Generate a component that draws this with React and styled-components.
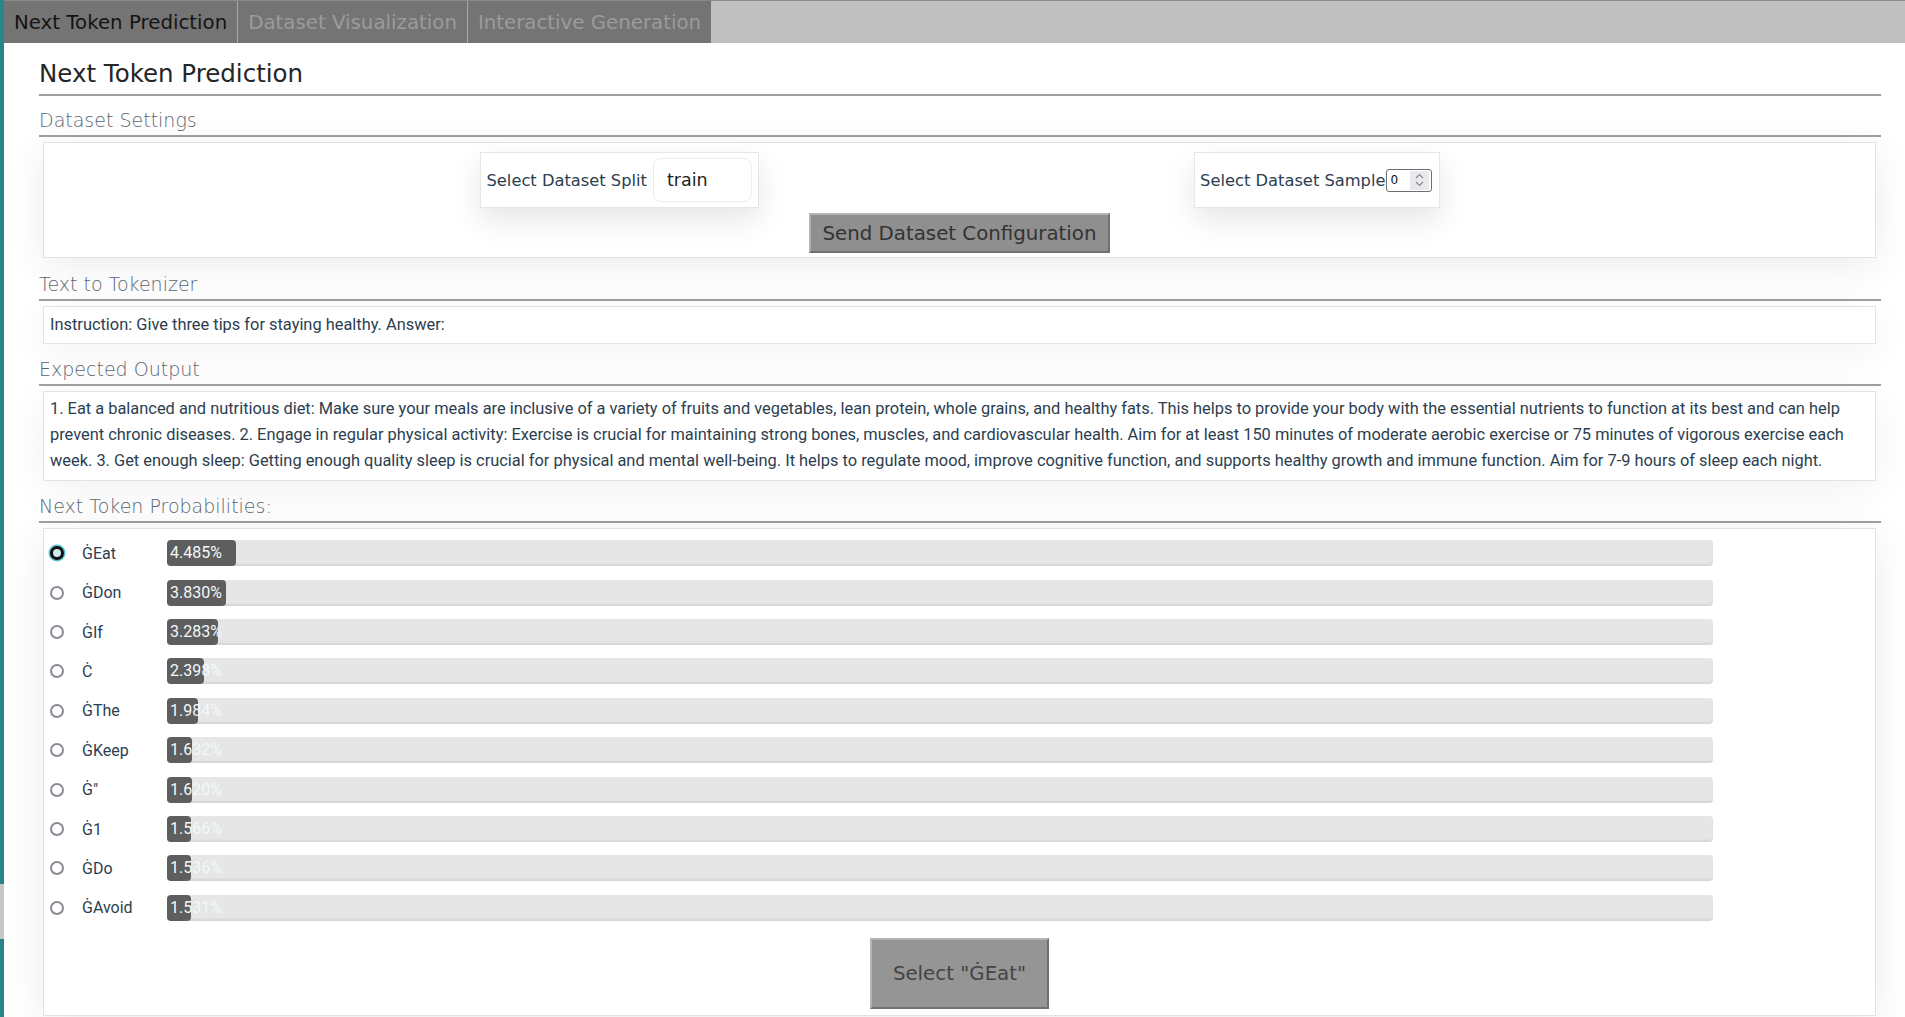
import React from 'react';
import styled, { createGlobalStyle } from 'styled-components';

const GlobalStyle = createGlobalStyle`
  html, body {
    margin: 0;
    padding: 0;
    background: #fff;
  }
  body {
    font-family: "DejaVu Sans", sans-serif;
  }
`;

const Shell = styled.div`
  display: flex;
  min-height: 1017px;
`;

const Edge = styled.div`
  width: 4px;
  flex: none;
  display: flex;
  flex-direction: column;
  background: #2a858b;
`;

const EdgePatch = styled.div`
  margin-top: 884px;
  height: 55px;
  background: #c6c6c6;
`;

const Main = styled.main`
  flex: 1;
  min-width: 0;
  background: #fff;
`;

const TabBar = styled.nav`
  display: flex;
  height: 43px;
  box-sizing: border-box;
  background: #c0c0c0;
  border-top: 1px solid #8a8a8a;
`;

const Tab = styled.button`
  height: 100%;
  padding: 0 10px;
  border: none;
  border-left: ${p => (p.$first ? 'none' : '1px solid #a9a9a9')};
  background: #747474;
  color: ${p => (p.$active ? '#141414' : '#9b9b9b')};
  font: 400 19.8px "DejaVu Sans", sans-serif;
  cursor: pointer;
`;

const Content = styled.div`
  padding: 17px 24px 0 35px;
`;

const PageTitle = styled.h1`
  margin: 0;
  padding-bottom: 6px;
  border-bottom: 2px solid #a0a0a0;
  font: 400 24.5px/28px "DejaVu Sans", sans-serif;
  color: #262626;
`;

const SectionTitle = styled.h2`
  margin: ${p => p.$top || 14}px 0 0;
  padding-bottom: 4px;
  border-bottom: 2px solid #a0a0a0;
  font: 200 19px/22px "DejaVu Sans", sans-serif;
  color: #5a6570;
`;

const Card = styled.section`
  margin: 5px 5px 0 4px;
  padding: ${p => p.$pad || '0'};
  background: #fff;
  border: 1px solid #e2e2e2;
  box-shadow: 0 8px 40px rgba(0, 0, 0, 0.08);
`;

const ConfigRow = styled.div`
  width: 960px;
  margin: 0 auto;
  display: flex;
  justify-content: space-between;
`;

const ConfigBox = styled.div`
  height: 56px;
  box-sizing: border-box;
  display: flex;
  align-items: center;
  padding: 0 ${p => p.$right || 6}px 0 ${p => p.$left || 6}px;
  background: #fff;
  border: 1px solid #e6e6e6;
  box-shadow: 0 12px 30px rgba(0, 0, 0, 0.1);
`;

const Label = styled.label`
  font: 400 16.3px "DejaVu Sans", sans-serif;
  color: #2c3e50;
  white-space: nowrap;
`;

const SplitInput = styled.div`
  width: 99px;
  height: 44px;
  box-sizing: border-box;
  margin-left: 6px;
  padding: 0 13px;
  display: flex;
  align-items: center;
  border: 1px solid #ececec;
  border-radius: 8px;
  font: 400 17.5px "DejaVu Sans", sans-serif;
  color: #222;
`;

const NumberInput = styled.div`
  width: 46px;
  height: 23px;
  box-sizing: border-box;
  display: flex;
  align-items: center;
  justify-content: space-between;
  padding: 0 2px 0 4px;
  border: 1px solid #6e6e6e;
  border-radius: 3px;
  font: 400 12px "DejaVu Sans", sans-serif;
  color: #111;
`;

const Spinner = styled.span`
  width: 19px;
  height: 19px;
  display: flex;
  align-items: center;
  justify-content: center;
  background: #e9e9ed;
`;

const ButtonRow = styled.div`
  display: flex;
  justify-content: center;
  margin-top: ${p => p.$top || 5}px;
`;

const GrayButton = styled.button`
  height: ${p => p.$h || 40}px;
  padding: 0 ${p => p.$px || 11}px;
  background: ${p => p.$bg || '#8f8f8f'};
  border: 2px solid;
  border-color: #b4b4b4 #707070 #707070 #b4b4b4;
  font: 400 19.8px "DejaVu Sans", sans-serif;
  color: ${p => p.$color || '#333'};
  cursor: pointer;
`;

const TextBox = styled.div`
  margin: 5px 5px 0 4px;
  padding: ${p => p.$pad || '6px 6px'};
  background: #fff;
  border: 1px solid #e4e4e4;
  box-shadow: 0 8px 40px rgba(0, 0, 0, 0.06);
  font: 400 16.4px/${p => p.$lh || 24}px Roboto, sans-serif;
  color: #2c3e50;
`;

const ProbRow = styled.div`
  height: 39.4px;
  display: flex;
  align-items: center;
  padding-left: 6px;
`;

const Radio = styled.span`
  width: 14px;
  height: 14px;
  box-sizing: border-box;
  flex: none;
  border-radius: 50%;
  border: ${p => (p.$checked ? '3.5px solid #111' : '2px solid #8d8a96')};
  background: ${p => (p.$checked ? '#cfe9ec' : '#fff')};
  box-shadow: ${p => (p.$checked ? '0 0 0 1.5px #55c2cc' : 'none')};
`;

const TokenName = styled.span`
  width: 85px;
  margin-left: 18px;
  flex: none;
  font: 400 16px Roboto, sans-serif;
  color: #2c3e50;
`;

const Track = styled.div`
  position: relative;
  flex: 1;
  margin-right: 162px;
  height: 26px;
  border-radius: 4px;
  background: #e6e6e6;
  box-shadow: inset 0 -2px 2px rgba(0, 0, 0, 0.07);
`;

const Fill = styled.div`
  position: absolute;
  left: 0;
  top: 0;
  bottom: 0;
  border-radius: 4px;
  background: #5e5e5e;
`;

const Pct = styled.span`
  position: relative;
  padding-left: 3px;
  font: 400 16px/26px Roboto, sans-serif;
  color: #f1f9fa;
`;

const tokens = [
  ['\u0120Eat', '4.485'],
  ['\u0120Don', '3.830'],
  ['\u0120If', '3.283'],
  ['\u010A', '2.398'],
  ['\u0120The', '1.984'],
  ['\u0120Keep', '1.632'],
  ['\u0120"', '1.620'],
  ['\u01201', '1.566'],
  ['\u0120Do', '1.536'],
  ['\u0120Avoid', '1.531'],
];

const expected =
  '1. Eat a balanced and nutritious diet: Make sure your meals are inclusive of a variety of fruits and vegetables, lean protein, whole grains, and healthy fats. This helps to provide your body with the essential nutrients to function at its best and can help prevent chronic diseases. 2. Engage in regular physical activity: Exercise is crucial for maintaining strong bones, muscles, and cardiovascular health. Aim for at least 150 minutes of moderate aerobic exercise or 75 minutes of vigorous exercise each week. 3. Get enough sleep: Getting enough quality sleep is crucial for physical and mental well-being. It helps to regulate mood, improve cognitive function, and supports healthy growth and immune function. Aim for 7-9 hours of sleep each night.';

const SpinIcon = () => (
  <svg width="9" height="14" viewBox="0 0 9 14" fill="none" stroke="#8a8a8a" strokeWidth="1.2">
    <path d="M1 5 L4.5 1.5 L8 5" />
    <path d="M1 9 L4.5 12.5 L8 9" />
  </svg>
);

export default function App() {
  const selected = 0;
  return (
    <>
      <GlobalStyle />
      <Shell>
        <Edge>
          <EdgePatch />
        </Edge>
        <Main>
          <TabBar>
            <Tab $first $active>Next Token Prediction</Tab>
            <Tab>Dataset Visualization</Tab>
            <Tab>Interactive Generation</Tab>
          </TabBar>
          <Content>
            <PageTitle>Next Token Prediction</PageTitle>

            <SectionTitle $top={13}>Dataset Settings</SectionTitle>
            <Card $pad="9px 0 4px">
              <ConfigRow>
                <ConfigBox>
                  <Label>Select Dataset Split</Label>
                  <SplitInput>train</SplitInput>
                </ConfigBox>
                <ConfigBox $left={5} $right={7}>
                  <Label>Select Dataset Sample</Label>
                  <NumberInput>
                    0
                    <Spinner>
                      <SpinIcon />
                    </Spinner>
                  </NumberInput>
                </ConfigBox>
              </ConfigRow>
              <ButtonRow>
                <GrayButton>Send Dataset Configuration</GrayButton>
              </ButtonRow>
            </Card>

            <SectionTitle $top={15}>Text to Tokenizer</SectionTitle>
            <TextBox>Instruction: Give three tips for staying healthy. Answer:</TextBox>

            <SectionTitle>Expected Output</SectionTitle>
            <TextBox $pad="4px 6px 5px" $lh={26.2}>{expected}</TextBox>

            <SectionTitle>Next Token Probabilities:</SectionTitle>
            <Card $pad="5px 0 6px">
              {tokens.map(([name, pct], i) => (
                <ProbRow key={name}>
                  <Radio $checked={i === selected} />
                  <TokenName>{name}</TokenName>
                  <Track>
                    <Fill style={{ width: `${pct}%` }} />
                    <Pct>{pct}%</Pct>
                  </Track>
                </ProbRow>
              ))}
              <ButtonRow $top={10}>
                <GrayButton $h={71} $px={21} $bg="#959595" $color="#444">
                  Select "{tokens[selected][0]}"
                </GrayButton>
              </ButtonRow>
            </Card>
          </Content>
        </Main>
      </Shell>
    </>
  );
}
